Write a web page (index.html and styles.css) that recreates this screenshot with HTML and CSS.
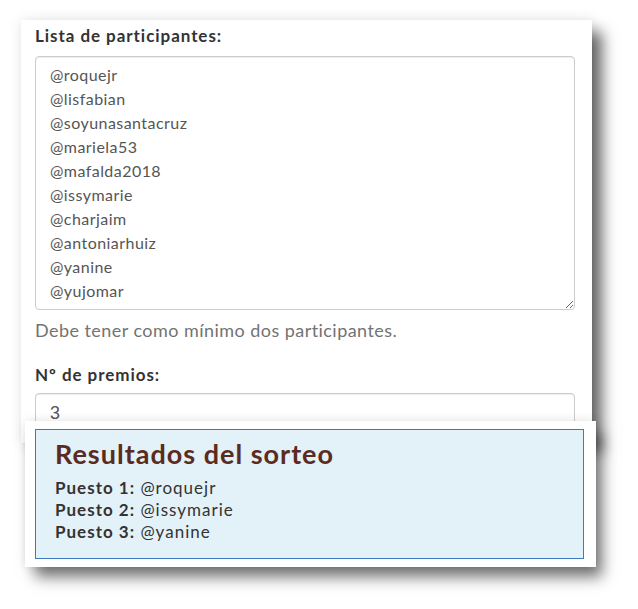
FILE: index.html
```
<!DOCTYPE html>
<html lang="es">
<head>
    <meta charset="UTF-8">
    <meta name="viewport" content="width=device-width, initial-scale=1.0">
    <title>Sorteo</title>
    <link rel="stylesheet" href="styles.css">
</head>
<body>
    <div class="stage">
        <div class="form-card">
            <label class="field-label" for="participantes">Lista de participantes:</label>
            <textarea id="participantes" class="field-area">@roquejr
@lisfabian
@soyunasantacruz
@mariela53
@mafalda2018
@issymarie
@charjaim
@antoniarhuiz
@yanine
@yujomar</textarea>
            <p class="help">Debe tener como mínimo dos participantes.</p>
            <label class="field-label premios" for="premios">Nº de premios:</label>
            <input type="text" id="premios" class="field-input" value="3">
        </div>
        <div class="results-card">
            <div class="results">
                <h2>Resultados del sorteo</h2>
                <p><strong>Puesto 1:</strong> @roquejr</p>
                <p><strong>Puesto 2:</strong> @issymarie</p>
                <p><strong>Puesto 3:</strong> @yanine</p>
            </div>
        </div>
    </div>
</body>
</html>
```

FILE: styles.css
```
body {
    margin: 0;
    padding: 0;
    min-height: 100vh;
    background: #fff;
    font-family: 'Lato', 'Liberation Sans', sans-serif;
    color: #333;
}
.stage {
    padding: 20px 0 40px 21px;
}
.form-card {
    box-sizing: border-box;
    width: 571px;
    height: 423px;
    padding: 4px 17px 0 14px;
    background: #fff;
    box-shadow: 12px 10px 14px -2px rgba(0, 0, 0, 0.6), 0 0 12px rgba(0, 0, 0, 0.1);
    overflow: hidden;
}
.field-label {
    display: block;
    font-size: 17px;
    line-height: 24px;
    font-weight: 700;
    letter-spacing: 0.95px;
    color: #333;
    margin-bottom: 8px;
}
.field-label.premios {
    margin-bottom: 6px;
}
.field-area {
    display: block;
    box-sizing: border-box;
    width: 540px;
    height: 254px;
    margin: 0;
    padding: 6px 14px;
    border: 1px solid #ccc;
    border-radius: 4px;
    box-shadow: inset 0 1px 1px rgba(0, 0, 0, 0.075);
    font-family: 'Lato', sans-serif;
    font-size: 16px;
    line-height: 24px;
    letter-spacing: 0.45px;
    color: #555;
    overflow: hidden;
}
.help {
    margin: 8px 0 21px;
    font-size: 18px;
    line-height: 24px;
    letter-spacing: 0.45px;
    color: #737373;
}
.field-input {
    display: block;
    box-sizing: border-box;
    width: 540px;
    height: 40px;
    padding: 8px 14px;
    border: 1px solid #ccc;
    border-radius: 4px;
    box-shadow: inset 0 1px 1px rgba(0, 0, 0, 0.075);
    font-family: 'Liberation Sans', Arial, sans-serif;
    font-size: 18px;
    color: #555;
}
.results-card {
    position: relative;
    box-sizing: border-box;
    width: 571px;
    height: 146px;
    margin: -22px 0 0 4px;
    padding: 8px 12px 8px 10px;
    background: #fff;
    box-shadow: 8px 12px 14px -2px rgba(0, 0, 0, 0.55), 0 0 10px rgba(0, 0, 0, 0.1);
}
.results {
    box-sizing: border-box;
    height: 130px;
    padding: 9px 19px 0;
    background: #e3f1f8;
    border: 1px solid #3f79bf;
}
.results h2 {
    margin: 0 0 8px;
    font-size: 27px;
    line-height: 30px;
    font-weight: 700;
    letter-spacing: 1px;
    color: #5c2b1f;
}
.results p {
    margin: 0;
    font-size: 17px;
    line-height: 22px;
    letter-spacing: 1px;
    color: #333;
}
```
